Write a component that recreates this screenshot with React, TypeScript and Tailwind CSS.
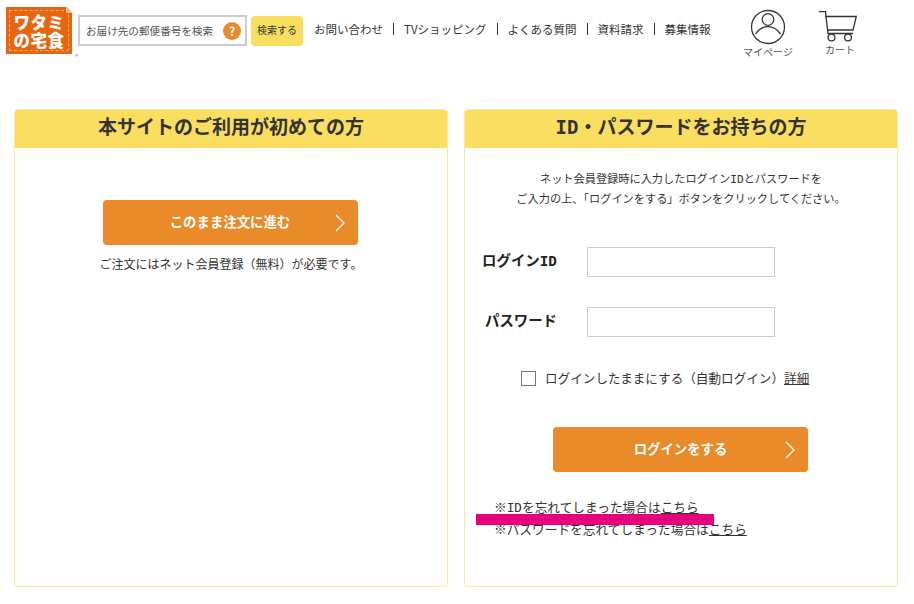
const jp = { fontFamily: '"Noto Sans CJK JP", sans-serif' };
const idFont = "leading-[0] [font-family:'DejaVu_Sans_Mono',monospace]";

function Chevron() {
  return (
    <svg width="12" height="20" viewBox="0 0 12 20" fill="none" stroke="#fff" strokeWidth="1.3" className="absolute right-[12px] top-1/2 -translate-y-1/2">
      <path d="M2 2l8 8-8 8" />
    </svg>
  );
}

function Logo() {
  return (
    <div className="relative w-[72px] h-[54px] ml-[6px] mt-[7px] shrink-0">
      <div className="relative w-[66px] h-[47px] bg-[#e8650f] p-[3px] [clip-path:polygon(0_0,92%_0,100%_12%,100%_100%,0_100%)]">
        <div className="w-full h-full border border-dashed border-[#f4a66a] flex flex-col items-center justify-center font-black text-white text-[16.5px] tracking-[0.5px]">
          <span className="block h-[18px] leading-[18px]">ワタミ</span>
          <span className="block h-[18px] leading-[18px]">の宅食</span>
        </div>
        <div className="absolute right-0 top-0 w-[6px] h-[6px] bg-[#f5b98a]" />
      </div>
      <span className="absolute right-0 bottom-[1px] text-[6px] leading-[6px] text-[#777]">®</span>
    </div>
  );
}

function Header() {
  const links = ["お問い合わせ", "TVショッピング", "よくある質問", "資料請求", "募集情報"];
  return (
    <header className="flex items-start h-[109px] pr-[54px]">
      <Logo />
      <div className="mt-[15px] w-[169px] h-[31px] border-2 border-[#ccc] flex items-center justify-between pl-[6px] pr-[4px] text-[10.6px] text-[#555]">
        <span>お届け先の郵便番号を検索</span>
        <span className="w-[18px] h-[18px] rounded-full bg-[#e88b28] text-white font-bold text-[12px] flex items-center justify-center">?</span>
      </div>
      <button className="ml-[4px] mt-[16px] w-[52px] h-[30px] bg-[#f9de5f] rounded-[4px] text-[10px] text-[#333] pb-[3px]">検索する</button>
      <nav className="ml-[11px] mt-[20px] flex items-center text-[11.5px] leading-[18px] text-[#333]">
        {links.map((l, i) => (
          <span key={l} className="flex items-center">
            {i > 0 && <span className="mx-[10px] w-px h-[12px] bg-[#333]" />}
            {l}
          </span>
        ))}
      </nav>
      <div className="ml-auto mt-[9px] w-[50px] flex flex-col items-center">
        <svg width="36" height="36" viewBox="0 0 36 36" fill="none" stroke="#333" strokeWidth="1.3">
          <circle cx="18" cy="18" r="16.5" />
          <circle cx="18" cy="10.5" r="5.8" />
          <path d="M5.6 25C9 20 13 17.7 18 17.7S27 20 30.6 25" />
        </svg>
        <span className="mt-[0px] text-[10px] leading-[14px] text-[#555] whitespace-nowrap">マイページ</span>
      </div>
      <div className="ml-[27px] mt-[11px] w-[40px] flex flex-col items-center">
        <svg width="38" height="31" viewBox="0 0 38 31" fill="none" stroke="#333" strokeWidth="1.3" className="mr-[4px]">
          <path d="M0 .7h6.5L9 22.5h25" />
          <path d="M6 5.5h31.3L34 19H8.6" />
          <circle cx="12.5" cy="26.5" r="3.4" />
          <circle cx="29" cy="26.5" r="3.4" />
        </svg>
        <span className="mt-[1px] text-[10px] leading-[14px] text-[#555]">カート</span>
      </div>
    </header>
  );
}

function Card({ title, children }: { title: React.ReactNode; children: React.ReactNode }) {
  return (
    <section className="w-[434px] h-[478px] border border-[#f9e9a0] rounded-[4px] overflow-hidden flex flex-col">
      <h2 className="h-[38px] shrink-0 bg-[#f9de5f] flex items-center justify-center pb-[5px] text-[19px] font-bold text-[#333]">{title}</h2>
      {children}
    </section>
  );
}

function OrangeButton({ label, className }: { label: string; className: string }) {
  return (
    <button className={`relative w-[255px] h-[45px] bg-[#e88b28] rounded-[4px] text-white font-bold text-[13.4px] pb-[2px] ${className}`}>
      {label}
      <Chevron />
    </button>
  );
}

function Field({ label, className }: { label: React.ReactNode; className: string }) {
  return (
    <div className={`flex items-center h-[30px] ${className}`}>
      <span className="w-[122px] pr-[30px] text-right text-[14.4px] font-bold text-[#222] pb-[4px] whitespace-nowrap">{label}</span>
      <input className="w-[188px] h-[30px] border border-[#ccc] bg-white" />
    </div>
  );
}

export default function App() {
  return (
    <div className="w-[914px] h-[604px] bg-white overflow-hidden" style={jp}>
      <Header />
      <main className="flex gap-[16px] px-[14px]">
        <Card title="本サイトのご利用が初めての方">
          <div className="flex flex-col items-center pt-[52px]">
            <OrangeButton label="このまま注文に進む" className="mr-[2px]" />
            <p className="mt-[10px] text-[12px] leading-[18px] text-[#333]">ご注文にはネット会員登録（無料）が必要です。</p>
          </div>
        </Card>
        <Card title={<span><span className={idFont}>ID</span>・パスワードをお持ちの方</span>}>
          <div className="relative flex flex-col pt-[20px]">
            <p className="text-center text-[11.2px] leading-[20px] text-[#333]">
              ネット会員登録時に入力したログイン<span className={idFont}>ID</span>とパスワードを
              <br />
              ご入力の上、「ログインをする」ボタンをクリックしてください。
            </p>
            <Field label={<span>ログイン<span className={idFont}>ID</span></span>} className="mt-[39px]" />
            <Field label="パスワード" className="mt-[30px]" />
            <label className="mt-[32px] ml-[56px] flex items-center text-[12.6px] leading-[18px] text-[#333]">
              <span className="w-[15px] h-[15px] border border-[#777] mr-[9px]" />
              ログインしたままにする（自動ログイン）<span className="underline">詳細</span>
            </label>
            <OrangeButton label="ログインをする" className="mt-[40px] ml-[88px]" />
            <div className="mt-[24px] ml-[29px] text-[12.7px] leading-[22px] text-[#333]">
              <p>※<span className={idFont}>ID</span>を忘れてしまった場合は<span className="underline">こちら</span></p>
              <p>※パスワードを忘れてしまった場合は<span className="underline">こちら</span></p>
            </div>
            <div className="absolute left-[11px] top-[366px] w-[238px] h-[11px] bg-[#e6007e]" />
          </div>
        </Card>
      </main>
    </div>
  );
}
